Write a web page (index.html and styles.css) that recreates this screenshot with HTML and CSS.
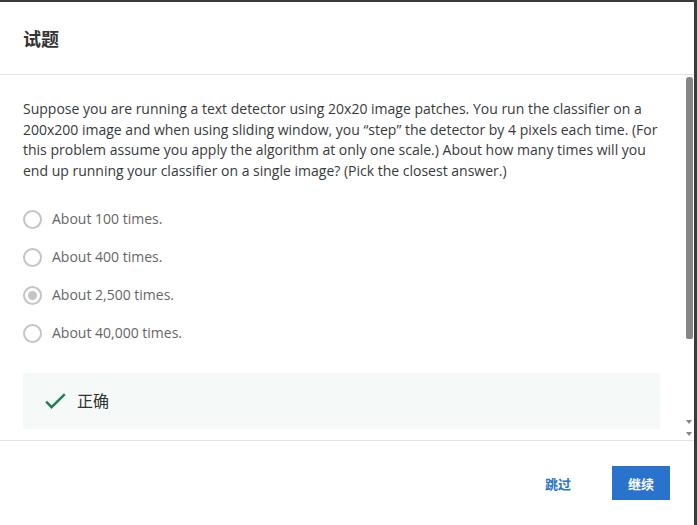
FILE: index.html
```html
<!DOCTYPE html>
<html lang="zh">
<head>
<meta charset="utf-8">
<title>试题</title>
<link rel="stylesheet" href="styles.css">
</head>
<body>
<div class="modal">
  <header class="modal-header">
    <h1 class="modal-title">试题</h1>
  </header>
  <div class="modal-main">
    <div class="modal-content">
      <p class="question">Suppose you are running a text detector using 20x20 image patches. You run the classifier on a 200x200 image and when using sliding window, you “step” the detector by 4 pixels each time. (For this problem assume you apply the algorithm at only one scale.) About how many times will you end up running your classifier on a single image? (Pick the closest answer.)</p>
      <div class="options">
        <div class="option"><span class="radio"></span><span class="option-text">About 100 times.</span></div>
        <div class="option"><span class="radio"></span><span class="option-text">About 400 times.</span></div>
        <div class="option"><span class="radio checked"></span><span class="option-text">About 2,500 times.</span></div>
        <div class="option"><span class="radio"></span><span class="option-text">About 40,000 times.</span></div>
      </div>
      <div class="feedback">
        <svg class="check" width="21" height="17" viewBox="0 0 21 17"><path d="M1.2 8.6 L6.6 14.2 L19.8 1.2" fill="none" stroke="#1f7f51" stroke-width="2.4"/></svg>
        <span class="feedback-text">正确</span>
      </div>
    </div>
    <div class="scrollbar">
      <div class="thumb"></div>
      <div class="arrows">
        <span class="arrow"></span>
        <span class="arrow"></span>
      </div>
    </div>
  </div>
  <footer class="modal-footer">
    <button class="btn btn-ghost">跳过</button>
    <button class="btn btn-primary">继续</button>
  </footer>
</div>
</body>
</html>
```
FILE: styles.css
```css
html, body {
  margin: 0;
  height: 100%;
}
body {
  background: #3a3a3a;
  padding: 2px 3px 0 0;
  box-sizing: border-box;
  font-family: "Open Sans", "Noto Sans CJK SC", sans-serif;
  color: #373a3c;
}
.modal {
  background: #fff;
  height: 523px;
  display: flex;
  flex-direction: column;
}
.modal-header {
  height: 72px;
  display: flex;
  align-items: center;
  padding-left: 23px;
  border-bottom: 1px solid #e3e3e3;
}
.modal-title {
  margin: 0;
  font-family: "Noto Sans CJK SC", sans-serif;
  font-size: 18px;
  font-weight: 700;
  color: #333;
}
.modal-main {
  height: 365px;
  display: flex;
  overflow: hidden;
}
.modal-content {
  flex: 1;
  padding: 24px 26px 0 23px;
}
.question {
  margin: 0;
  font-size: 14px;
  line-height: 20.5px;
  color: #373a3c;
}
.options {
  margin-top: 19px;
  display: flex;
  flex-direction: column;
}
.option {
  height: 38px;
  display: flex;
  align-items: center;
  gap: 10px;
}
.radio {
  width: 19px;
  height: 19px;
  box-sizing: border-box;
  border: 2px solid #c4c4c4;
  border-radius: 50%;
  display: flex;
  align-items: center;
  justify-content: center;
}
.radio.checked::after {
  content: "";
  width: 9px;
  height: 9px;
  border-radius: 50%;
  background: #c4c4c4;
}
.option-text {
  font-size: 14px;
  line-height: 20.5px;
  color: #666;
}
.feedback {
  margin-top: 21px;
  height: 56px;
  background: #f5f9f8;
  display: flex;
  align-items: center;
  padding-left: 22px;
  gap: 11px;
}
.check {
  display: block;
  margin-top: 1px;
}
.feedback-text {
  font-family: "Noto Sans CJK SC", sans-serif;
  font-size: 16px;
  line-height: 16px;
  margin-bottom: 2px;
  color: #333;
}
.scrollbar {
  width: 7px;
  margin-right: 1px;
  display: flex;
  flex-direction: column;
  justify-content: space-between;
  padding: 2px 0 4px;
}
.thumb {
  height: 262px;
  background: #858585;
  border-radius: 3px 3px 2px 2px;
}
.arrows {
  display: flex;
  flex-direction: column;
  gap: 8px;
}
.arrow {
  width: 0;
  height: 0;
  border-left: 3.5px solid transparent;
  border-right: 3.5px solid transparent;
  border-top: 4px solid #858585;
}
.modal-footer {
  flex: 1;
  border-top: 1px solid #e3e3e3;
  display: flex;
  justify-content: flex-end;
  align-items: center;
  gap: 25px;
  padding-right: 24px;
}
.btn {
  width: 58px;
  height: 34px;
  border: 0;
  padding: 0;
  font-family: "Noto Sans CJK SC", sans-serif;
  font-size: 13px;
  font-weight: 700;
  cursor: pointer;
}
.btn-ghost {
  background: transparent;
  color: #2a73cc;
}
.btn-primary {
  background: #2a73cc;
  color: #fff;
}
```
